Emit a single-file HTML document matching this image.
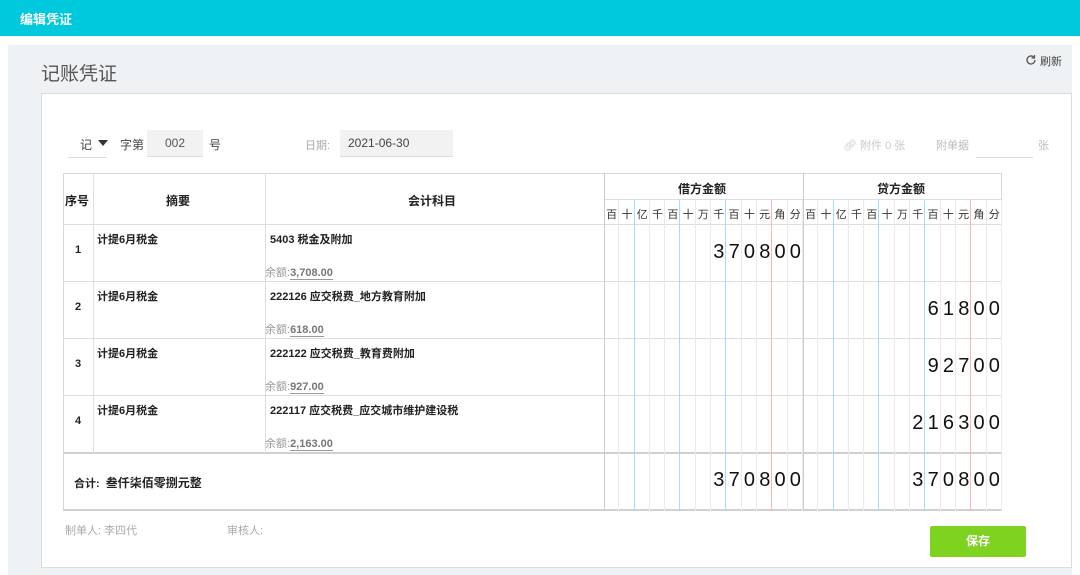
<!DOCTYPE html>
<html><head><meta charset="utf-8"><style>
*{margin:0;padding:0;box-sizing:border-box}
body{width:1080px;height:571px;overflow:hidden;background:#fff;font-family:"Liberation Sans","Noto Sans CJK SC",sans-serif;color:#333;position:relative}
.a{position:absolute;white-space:nowrap}
.hd{left:0;top:0;width:1080px;height:36px;background:#00c9de}
.panel{left:8px;top:45px;width:1064px;height:530px;background:#eff2f5}
.card{left:41px;top:93px;width:1031px;height:475px;background:#fff;border:1px solid #dcdcdc}
.h{background:#ddd}
.cols{display:flex}
.cols div{width:15.3px;height:311px;border-right:1px solid #eaeaea;flex:none}
.cols div.b{border-right-color:#a8dcf4}
.cols div.r{border-right-color:#f7b7b7}
.units{display:flex;font-size:11px;color:#333}
.units span{width:15.3px;text-align:center;flex:none}
.dg{display:flex;justify-content:flex-end;font-size:20px;color:#111}
.dg span{width:15.3px;text-align:center;flex:none}
.b12{font-weight:bold;font-size:11px;color:#222}
.bal{font-size:11px;color:#999}
.bal u{color:#777;font-weight:bold;text-decoration:none;border-bottom:1px solid #999}
</style></head><body>
<div class="a hd"></div>
<div class="a" style="left:20px;top:9px;color:#fff;font-size:13px;font-weight:bold">编辑凭证</div>
<div class="a panel"></div>
<div class="a" style="left:41px;top:59px;font-size:19px;color:#555">记账凭证</div>
<svg class="a" style="left:1025px;top:54px" width="12" height="12" viewBox="0 0 12 12"><path d="M10 6a4 4 0 1 1-1.2-2.9" fill="none" stroke="#555" stroke-width="1.3"/><path d="M9.5 1v3h-3" fill="none" stroke="#555" stroke-width="1.3"/></svg>
<div class="a" style="left:1040px;top:53px;font-size:11px;color:#444">刷新</div>
<div class="a card"></div>

<div class="a" style="left:80px;top:136px;font-size:12px;color:#444">记</div>
<div class="a" style="left:98px;top:140px;width:0;height:0;border-left:5px solid transparent;border-right:5px solid transparent;border-top:6px solid #333"></div>
<div class="a h" style="left:68px;top:157px;width:39px;height:1px;background:#ddd"></div>
<div class="a" style="left:120px;top:136px;font-size:12px;color:#444">字第</div>
<div class="a" style="left:147px;top:130px;width:56px;height:27px;background:#f2f2f2;border-bottom:1px solid #ddd;font-size:12px;color:#555;text-align:center;line-height:27px">002</div>
<div class="a" style="left:209px;top:136px;font-size:12px;color:#444">号</div>
<div class="a" style="left:305px;top:137px;font-size:11px;color:#aaa">日期:</div>
<div class="a" style="left:340px;top:130px;width:113px;height:27px;background:#f2f2f2;border-bottom:1px solid #ddd;font-size:12px;color:#444;padding-left:8px;line-height:27px">2021-06-30</div>
<div class="a" style="left:843px;top:137px;font-size:11px;color:#c8c8c8">&#128279;&#xFE0E; 附件 0 张</div>
<div class="a" style="left:936px;top:137px;font-size:11px;color:#bbb">附单据</div>
<div class="a" style="left:976px;top:157px;width:57px;height:1px;background:#ddd"></div>
<div class="a" style="left:1038px;top:137px;font-size:11px;color:#bbb">张</div>

<!-- table frame -->
<div class="a" style="left:63px;top:173px;width:939px;height:338px;border:1px solid #d8d8d8;border-bottom:2px solid #d0d0d0"></div>
<div class="a h" style="left:63px;top:224px;width:939px;height:1px"></div>
<div class="a h" style="left:604px;top:199px;width:398px;height:1px"></div>
<div class="a h" style="left:63px;top:281px;width:939px;height:1px"></div>
<div class="a h" style="left:63px;top:338px;width:939px;height:1px"></div>
<div class="a h" style="left:63px;top:395px;width:939px;height:1px"></div>
<div class="a" style="left:63px;top:452px;width:939px;height:2px;background:#d0d0d0"></div>
<div class="a h" style="left:93px;top:173px;width:1px;height:280px"></div>
<div class="a h" style="left:265px;top:173px;width:1px;height:280px"></div>
<div class="a h" style="left:604px;top:173px;width:1px;height:338px;background:#ccc"></div>
<div class="a h" style="left:803px;top:173px;width:1px;height:338px;background:#ccc"></div>

<div class="a cols" style="left:604px;top:200px"><div></div><div class="b"></div><div></div><div></div><div class="b"></div><div></div><div></div><div class="b"></div><div></div><div></div><div class="r"></div><div></div><div></div></div>
<div class="a cols" style="left:803px;top:200px"><div></div><div class="b"></div><div></div><div></div><div class="b"></div><div></div><div></div><div class="b"></div><div></div><div></div><div class="r"></div><div></div><div></div></div>

<div class="a b12" style="left:65px;top:192px;font-size:12px">序号</div>
<div class="a b12" style="left:166px;top:192px;font-size:12px">摘要</div>
<div class="a b12" style="left:408px;top:192px;font-size:12px">会计科目</div>
<div class="a b12" style="left:678px;top:180px;font-size:12px">借方金额</div>
<div class="a b12" style="left:877px;top:180px;font-size:12px">贷方金额</div>
<div class="a units" style="left:604px;top:206px"><span>百</span><span>十</span><span>亿</span><span>千</span><span>百</span><span>十</span><span>万</span><span>千</span><span>百</span><span>十</span><span>元</span><span>角</span><span>分</span></div>
<div class="a units" style="left:803px;top:206px"><span>百</span><span>十</span><span>亿</span><span>千</span><span>百</span><span>十</span><span>万</span><span>千</span><span>百</span><span>十</span><span>元</span><span>角</span><span>分</span></div>

<!-- rows -->
<div class="a b12" style="left:75px;top:244px">1</div>
<div class="a b12" style="left:97px;top:231px">计提6月税金</div>
<div class="a b12" style="left:270px;top:231px">5403 税金及附加</div>
<div class="a bal" style="left:265px;top:264px">余额:<u>3,708.00</u></div>
<div class="a dg" style="left:604px;width:199px;top:241px"><span>3</span><span>7</span><span>0</span><span>8</span><span>0</span><span>0</span></div>

<div class="a b12" style="left:75px;top:301px">2</div>
<div class="a b12" style="left:97px;top:288px">计提6月税金</div>
<div class="a b12" style="left:270px;top:288px">222126 应交税费_地方教育附加</div>
<div class="a bal" style="left:265px;top:321px">余额:<u>618.00</u></div>
<div class="a dg" style="left:803px;width:199px;top:298px"><span>6</span><span>1</span><span>8</span><span>0</span><span>0</span></div>

<div class="a b12" style="left:75px;top:358px">3</div>
<div class="a b12" style="left:97px;top:345px">计提6月税金</div>
<div class="a b12" style="left:270px;top:345px">222122 应交税费_教育费附加</div>
<div class="a bal" style="left:265px;top:378px">余额:<u>927.00</u></div>
<div class="a dg" style="left:803px;width:199px;top:355px"><span>9</span><span>2</span><span>7</span><span>0</span><span>0</span></div>

<div class="a b12" style="left:75px;top:415px">4</div>
<div class="a b12" style="left:97px;top:402px">计提6月税金</div>
<div class="a b12" style="left:270px;top:402px">222117 应交税费_应交城市维护建设税</div>
<div class="a bal" style="left:265px;top:435px">余额:<u>2,163.00</u></div>
<div class="a dg" style="left:803px;width:199px;top:412px"><span>2</span><span>1</span><span>6</span><span>3</span><span>0</span><span>0</span></div>

<div class="a b12" style="left:74px;top:474px">合计: &nbsp;<span style="font-size:12px">叁仟柒佰零捌元整</span></div>
<div class="a dg" style="left:604px;width:199px;top:469px"><span>3</span><span>7</span><span>0</span><span>8</span><span>0</span><span>0</span></div>
<div class="a dg" style="left:803px;width:199px;top:469px"><span>3</span><span>7</span><span>0</span><span>8</span><span>0</span><span>0</span></div>

<div class="a" style="left:65px;top:522px;font-size:11px;color:#aaa">制单人: 李四代</div>
<div class="a" style="left:227px;top:522px;font-size:11px;color:#aaa">审核人:</div>
<div class="a" style="left:930px;top:526px;width:96px;height:31px;background:#7ed321;border-radius:2px;color:#fff;font-size:12px;font-weight:bold;text-align:center;line-height:31px">保存</div>
</body></html>
